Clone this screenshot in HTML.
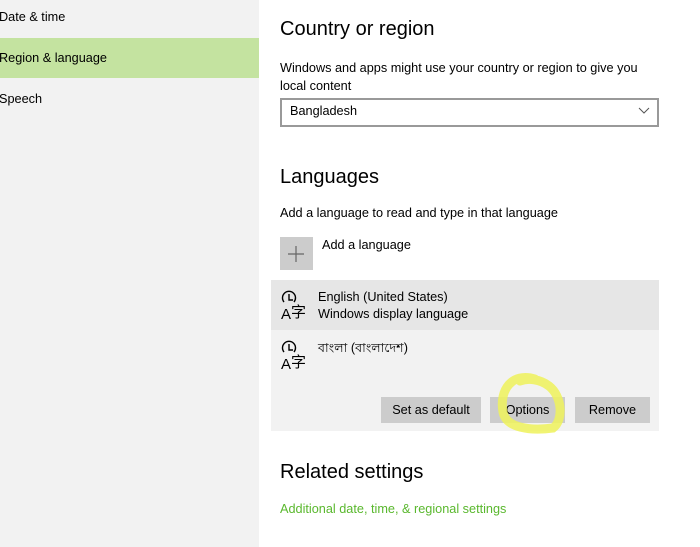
<!DOCTYPE html>
<html><head><meta charset="utf-8"><style>
body{margin:0;width:700px;height:547px;background:#fff;font-family:"Segoe UI","Liberation Sans","Noto Sans CJK SC",sans-serif;color:#000;position:relative;overflow:hidden}
.a{position:absolute;white-space:nowrap}
.t{font-size:12.7px}
.side{position:absolute;left:0;top:0;width:259px;height:547px;background:#f2f2f2}
.btn{position:absolute;top:397px;height:26px;background:#ccc;font-size:12.7px;line-height:27px;text-align:center}
</style></head><body>
<div class="side"></div>
<div class="a" style="left:0;top:38px;width:259px;height:40px;background:#c4e3a0"></div>
<div class="a t" style="left:-1px;top:10px">Date &amp; time</div>
<div class="a t" style="left:-1px;top:51px">Region &amp; language</div>
<div class="a t" style="left:-1px;top:92px">Speech</div>

<div class="a" style="left:280px;top:18px;font-size:20px">Country or region</div>
<div class="a t" style="left:280px;top:59px;line-height:18px">Windows and apps might use your country or region to give you<br>local content</div>
<div class="a" style="left:280px;top:98px;width:375px;height:25px;border:2px solid #999"></div>
<div class="a t" style="left:290px;top:104px">Bangladesh</div>
<svg class="a" style="left:638px;top:107px" width="12" height="8"><path d="M1 1 L6 6 L11 1" stroke="#555" fill="none"/></svg>

<div class="a" style="left:280px;top:166px;font-size:20px">Languages</div>
<div class="a t" style="left:280px;top:206px">Add a language to read and type in that language</div>
<div class="a" style="left:280px;top:237px;width:33px;height:33px;background:#ccc"></div>
<svg class="a" style="left:287px;top:245px" width="18" height="18"><path d="M9 1V17M1 9H17" stroke="#666" stroke-width="1.2"/></svg>
<div class="a t" style="left:322px;top:238px">Add a language</div>

<div class="a" style="left:271px;top:280px;width:388px;height:50px;background:#e6e6e6"></div>
<div class="a" style="left:271px;top:330px;width:388px;height:101px;background:#f2f2f2"></div>
<div class="a t" style="left:318px;top:289px;line-height:17px">English (United States)<br>Windows display language</div>
<div class="a t" style="left:318px;top:339px">বাংলা (বাংলাদেশ)</div>
<svg class="a" style="left:280px;top:289px" width="32" height="32"><path d="M4 13 A6.5 6.5 0 1 1 14 13" fill="none" stroke="#000" stroke-width="1.4"/><path d="M9 5V11H13" stroke="#000" fill="none" stroke-width="1.4"/><text x="1" y="30" font-size="15" font-family="Liberation Sans">A</text><text x="11" y="28" font-size="15" font-family="Noto Sans CJK SC">字</text></svg>
<svg class="a" style="left:280px;top:339px" width="32" height="32"><path d="M4 13 A6.5 6.5 0 1 1 14 13" fill="none" stroke="#000" stroke-width="1.4"/><path d="M9 5V11H13" stroke="#000" fill="none" stroke-width="1.4"/><text x="1" y="30" font-size="15" font-family="Liberation Sans">A</text><text x="11" y="28" font-size="15" font-family="Noto Sans CJK SC">字</text></svg>

<div class="btn" style="left:381px;width:100px">Set as default</div>
<div class="btn" style="left:490px;width:75px">Options</div>
<div class="btn" style="left:575px;width:75px">Remove</div>
<svg class="a" style="left:0;top:0" width="700" height="547"><path d="M535 379 C512 372 499 390 503 412 C506 428 530 431 553 428 C564 420 562 396 549 386 C540 379 528 378 520 381" stroke="#eef25a" stroke-width="9" fill="none" stroke-linecap="round" opacity="0.85"/></svg>

<div class="a" style="left:280px;top:461px;font-size:20px">Related settings</div>
<div class="a t" style="left:280px;top:502px;color:#5ab82e">Additional date, time, &amp; regional settings</div>
</body></html>
